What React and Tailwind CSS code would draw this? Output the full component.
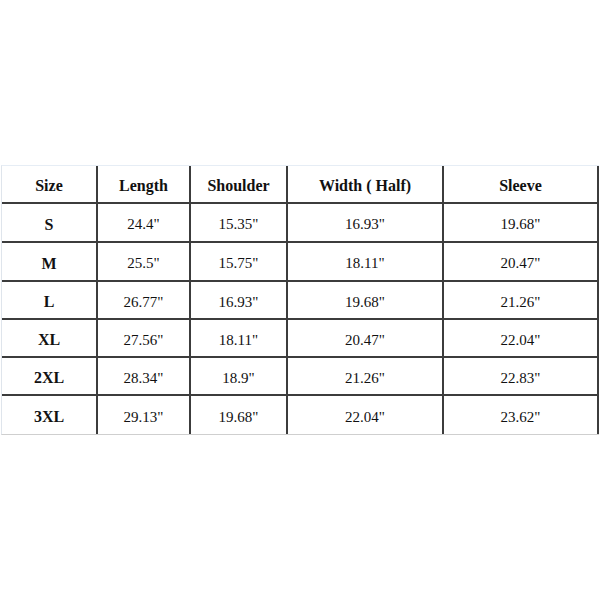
const headers = ["Size", "Length", "Shoulder", "Width ( Half)", "Sleeve"];

const rows = [
  ["S", '24.4"', '15.35"', '16.93"', '19.68"'],
  ["M", '25.5"', '15.75"', '18.11"', '20.47"'],
  ["L", '26.77"', '16.93"', '19.68"', '21.26"'],
  ["XL", '27.56"', '18.11"', '20.47"', '22.04"'],
  ["2XL", '28.34"', '18.9"', '21.26"', '22.83"'],
  ["3XL", '29.13"', '19.68"', '22.04"', '23.62"'],
];

// row heights include the 2px bottom rule
const rowHeights = ["h-[39px]", "h-[39px]", "h-[38px]", "h-[38px]", "h-[38px]", "h-[38px]"];

const grid = "grid grid-cols-[96px_93px_97px_156px_155px]";
const cell = "flex items-center justify-center pt-[4px] border-r-2 border-[#3c3c3c]";

export default function App() {
  return (
    <div
      className="h-[600px] w-[600px] bg-white pt-[165px] text-[#111]"
      style={{ fontFamily: '"Liberation Serif", "Times New Roman", serif' }}
    >
      <div className="ml-px w-[598px] border-l border-t border-b border-l-[#dfe5ec] border-t-[#e6edf5] border-b-[#cfcfcf]">
        <div className={`${grid} h-[38px] border-b-2 border-[#3c3c3c]`}>
          {headers.map((h) => (
            <div key={h} className={`${cell} text-[16px] font-bold`}>
              {h}
            </div>
          ))}
        </div>
        {rows.map((r, i) => (
          <div
            key={r[0]}
            className={`${grid} ${rowHeights[i]} ${i < rows.length - 1 ? "border-b-2 border-[#3c3c3c]" : ""}`}
          >
            {r.map((v, j) => (
              <div key={j} className={`${cell} ${j === 0 ? "text-[16px] font-bold" : "text-[15px]"}`}>
                {v}
              </div>
            ))}
          </div>
        ))}
      </div>
    </div>
  );
}
